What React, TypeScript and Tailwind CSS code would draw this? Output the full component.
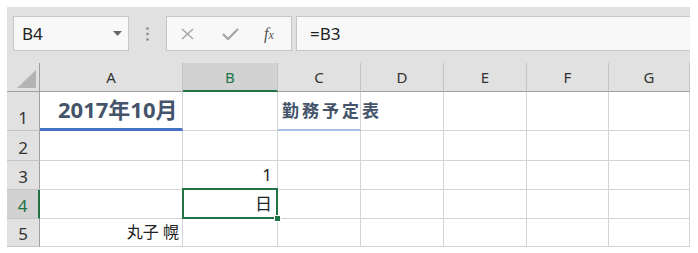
import React from "react";

const cols = ["A", "B", "C", "D", "E", "F", "G"];

const cellBase = "border-r border-b border-[#d4d4d4] bg-white";

function ColHeader({ label, selected }: { label: string; selected?: boolean }) {
  return (
    <div
      className={
        selected
          ? "flex items-center justify-center bg-[#d2d2d2] border-r border-[#c4c4c4] border-b-2 border-b-[#217346] text-[#217346] text-[15px] pt-[2px]"
          : "flex items-center justify-center bg-[#e1e1e1] border-r border-[#c4c4c4] border-b border-b-[#9f9f9f] text-[#333] text-[15px]"
      }
    >
      {label}
    </div>
  );
}

function RowHeader({ n, selected }: { n: number; selected?: boolean }) {
  return (
    <div
      className={
        selected
          ? "flex items-end justify-center pb-[4px] bg-[#d2d2d2] border-b border-[#c4c4c4] border-r-2 border-r-[#217346] text-[#217346] text-[17px] leading-none"
          : "flex items-end justify-center pb-[4px] bg-[#e1e1e1] border-b border-[#c4c4c4] border-r border-r-[#9f9f9f] text-[#333] text-[17px] leading-none"
      }
    >
      {n}
    </div>
  );
}

export default function App() {
  return (
    <div className="w-[698px] h-[253px] bg-white pt-[7px] pl-[7px] font-['Noto_Sans','Noto_Sans_CJK_JP',sans-serif]">
      <div className="w-[683px] bg-[#e1e1e1]">
        {/* Formula bar */}
        <div className="flex items-start h-[56px] pt-[9px] pl-[6px]">
          <div className="relative w-[116px] h-[35px] bg-[#f8f8f8] border border-[#c6c6c6] flex items-center pl-[8px] text-[17px] text-[#222]">
            B4
            <svg className="absolute right-[6px] top-[14px]" width="9" height="5" viewBox="0 0 9 5">
              <path d="M0 0h9L4.5 5z" fill="#666" />
            </svg>
          </div>
          <div className="w-[37px] h-[35px] flex items-center justify-center">
            <svg width="3" height="14" viewBox="0 0 3 14">
              <circle cx="1.5" cy="1.5" r="1.3" fill="#8a8a8a" />
              <circle cx="1.5" cy="7" r="1.3" fill="#8a8a8a" />
              <circle cx="1.5" cy="12.5" r="1.3" fill="#8a8a8a" />
            </svg>
          </div>
          <div className="w-[126px] h-[35px] bg-[#f8f8f8] border border-[#c6c6c6] flex items-center">
            <svg className="ml-[14px]" width="13" height="12" viewBox="0 0 13 12">
              <path d="M1 1l11 10M12 1L1 11" stroke="#a8a8a8" strokeWidth="1.6" />
            </svg>
            <svg className="ml-[28px]" width="17" height="12" viewBox="0 0 17 12">
              <path d="M1 6l5 5L16 1" stroke="#a8a8a8" strokeWidth="2.4" fill="none" />
            </svg>
            <span className="ml-[25px] font-['Liberation_Serif',serif] italic text-[16px] text-[#555] leading-none">
              f<span className="text-[12px]">x</span>
            </span>
          </div>
          <div className="flex-1 ml-[4px] h-[35px] bg-[#f8f8f8] border-y border-l border-[#c6c6c6] flex items-center pl-[13px] text-[17px] text-[#222]">
            =B3
          </div>
        </div>

        {/* Sheet grid */}
        <div className="grid grid-cols-[33px_143px_95px_83px_83px_83px_82px_81px] grid-rows-[29px_39px_30px_29px_29px_28px]">
          <div className="relative bg-[#e1e1e1] border-r border-b border-[#9f9f9f]">
            <svg className="absolute left-[10px] top-[7px]" width="19" height="18" viewBox="0 0 19 18">
              <path d="M19 0V18H0z" fill="#b4b4b4" />
            </svg>
          </div>
          {cols.map((c) => (
            <ColHeader key={c} label={c} selected={c === "B"} />
          ))}

          {/* Row 1 */}
          <RowHeader n={1} />
          <div className="flex items-end pl-[18px] pb-[8px] bg-white border-r border-[#d4d4d4] border-b-[3px] border-b-[#4472c4] text-[22px] font-bold text-[#44546a] leading-none">
            2017年10月
          </div>
          <div className={cellBase} />
          <div className="flex items-end pl-[4px] pb-[10px] bg-white border-r border-[#d4d4d4] border-b-2 border-b-[#a9c0e8] text-[17px] font-bold text-[#44546a] leading-none tracking-[3px] whitespace-nowrap z-10">
            勤務予定表
          </div>
          <div className={cellBase} />
          <div className={cellBase} />
          <div className={cellBase} />
          <div className={cellBase} />

          {/* Row 2 */}
          <RowHeader n={2} />
          {cols.map((c) => (
            <div key={c} className={cellBase} />
          ))}

          {/* Row 3 */}
          <RowHeader n={3} />
          <div className={cellBase} />
          <div className={`${cellBase} flex items-end justify-end pr-[5px] pb-[6px] text-[17px] text-[#222] leading-none`}>1</div>
          <div className={cellBase} />
          <div className={cellBase} />
          <div className={cellBase} />
          <div className={cellBase} />
          <div className={cellBase} />

          {/* Row 4 */}
          <RowHeader n={4} selected />
          <div className={cellBase} />
          <div className={`${cellBase} relative flex items-end justify-end pr-[5px] pb-[6px] text-[17px] text-[#222] leading-none`}>
            日
            <div className="absolute left-[-1px] top-[-2px] right-[-1px] bottom-[-1px] border-2 border-[#217346]" />
            <div className="absolute right-[-4px] bottom-[-4px] w-[7px] h-[7px] bg-[#217346] border border-white" />
          </div>
          <div className={cellBase} />
          <div className={cellBase} />
          <div className={cellBase} />
          <div className={cellBase} />
          <div className={cellBase} />

          {/* Row 5 */}
          <RowHeader n={5} />
          <div className={`${cellBase} flex items-end justify-end pr-[3px] pb-[6px] text-[16px] text-[#222] leading-none whitespace-pre`}>丸子 幌</div>
          <div className={cellBase} />
          <div className={cellBase} />
          <div className={cellBase} />
          <div className={cellBase} />
          <div className={cellBase} />
          <div className={cellBase} />
        </div>
      </div>
    </div>
  );
}
